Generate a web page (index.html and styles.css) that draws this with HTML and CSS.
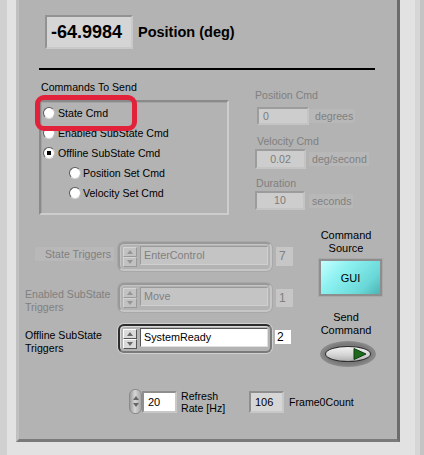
FILE: index.html
```html
<!DOCTYPE html>
<html>
<head>
<meta charset="utf-8">
<title>Commands</title>
<link rel="stylesheet" href="styles.css">
</head>
<body>
<div class="screen">
  <div class="edge-left"></div>
  <div class="panel">
    <div class="highlight"></div>

    <div class="pos-row">
      <div class="pos-box">-64.9984</div>
      <div class="pos-label">Position (deg)</div>
    </div>
    <div class="rule"></div>

    <div class="cmds">
      <div class="cmds-left">
        <div class="cap">Commands To Send</div>
        <div class="group">
          <div class="radio"><span class="dot"></span><span class="rtext">State Cmd</span></div>
          <div class="radio"><span class="dot"></span><span class="rtext">Enabled SubState Cmd</span></div>
          <div class="radio"><span class="dot on"></span><span class="rtext">Offline SubState Cmd</span></div>
          <div class="radio sub"><span class="dot"></span><span class="rtext">Position Set Cmd</span></div>
          <div class="radio sub"><span class="dot"></span><span class="rtext">Velocity Set Cmd</span></div>
        </div>
      </div>
      <div class="cmds-right">
        <div class="flabel l1">Position Cmd</div>
        <div class="frow r1"><div class="fbox b1">0</div><div class="unit u1">degrees</div></div>
        <div class="flabel l2">Velocity Cmd</div>
        <div class="frow r2"><div class="fbox b2 center">0.02</div><div class="unit u2">deg/second</div></div>
        <div class="flabel l3">Duration</div>
        <div class="frow r3"><div class="fbox b3 center">10</div><div class="unit u3">seconds</div></div>
      </div>
    </div>

    <div class="lower">
      <div class="triggers">
        <div class="tlabel single dis">State Triggers</div>
        <div class="ring dis">
          <div class="spin"><span class="half"><i class="up"></i></span><span class="half"><i class="down"></i></span></div>
          <div class="rfield">EnterControl</div>
        </div>
        <div class="count dis">7</div>

        <div class="tlabel dis">Enabled SubState<br>Triggers</div>
        <div class="ring dis">
          <div class="spin"><span class="half"><i class="up"></i></span><span class="half"><i class="down"></i></span></div>
          <div class="rfield">Move</div>
        </div>
        <div class="count dis c1">1</div>

        <div class="tlabel act">Offline SubState<br>Triggers</div>
        <div class="ring act">
          <div class="spin"><span class="half"><i class="up"></i></span><span class="half"><i class="down"></i></span></div>
          <div class="rfield">SystemReady</div>
        </div>
        <div class="count act">2</div>
      </div>

      <div class="source">
        <div class="stext">Command<br>Source</div>
        <div class="gui-btn"><div class="gui-face">GUI</div></div>
        <div class="stext send-text">Send<br>Command</div>
        <div class="send-btn">
          <div class="send-face">
            <svg class="play" width="14" height="12" viewBox="0 0 14 12"><polygon points="1,0.5 13,6 1,11.5" fill="#1d6a1d" stroke="#0f3d0f" stroke-width="1"/></svg>
          </div>
        </div>
      </div>
    </div>

    <div class="bottom">
      <div class="vspin"><i class="up"></i><i class="down"></i></div>
      <div class="numbox">20</div>
      <div class="blabel">Refresh<br>Rate [Hz]</div>
      <div class="framebox">106</div>
      <div class="flabel2">Frame0Count</div>
    </div>
  </div>
  <div class="edge-right"></div>
</div>
</body>
</html>
```

FILE: styles.css
```css
* { box-sizing: border-box; }
html, body { margin: 0; padding: 0; }
body {
  font-family: "Liberation Sans", Arial, sans-serif;
  font-size: 10.6px;
  line-height: 12px;
  color: #000;
  background: #e2e2e2;
}
.screen {
  display: flex;
  width: 424px;
  height: 455px;
  background: #e2e2e2;
}
.edge-left {
  width: 16px;
  height: 455px;
  background: linear-gradient(to right, #d0d0d0 7px, #e2e2e2 7px);
}
.edge-right {
  width: 24px;
  height: 455px;
  background: linear-gradient(to right, #e2e2e2 15px, #d6d6d6 15px, #d6d6d6 20px, #c4c4c4 20px);
}
.panel {
  position: relative;
  width: 384px;
  height: 442px;
  background: #b3b3b3;
  border-left: 3px solid #c0c0c0;
  border-right: 3px solid #6c6c6c;
  border-bottom: 3px solid #7a7a7a;
  padding-left: 6px;
  display: flex;
  flex-direction: column;
  align-items: flex-start;
}
.highlight {
  position: absolute;
  left: 16px;
  top: 95px;
  width: 102px;
  height: 36px;
  border: 5px solid #e2213b;
  border-radius: 9px;
  z-index: 5;
}

/* position indicator */
.pos-row {
  display: flex;
  align-items: center;
  margin-top: 15px;
  margin-left: 20px;
}
.pos-box {
  width: 88px;
  height: 34px;
  border: 2px solid;
  border-color: #929292 #c9c9c9 #c9c9c9 #929292;
  background: #d5d5d5;
  font-weight: bold;
  font-size: 18px;
  line-height: 30px;
  padding-left: 4px;
}
.pos-label {
  margin-left: 5px;
  font-weight: bold;
  font-size: 14.5px;
  line-height: 17px;
}
.rule {
  margin-top: 19px;
  margin-left: 14px;
  width: 336px;
  height: 2px;
  background: #000;
}

/* commands */
.cmds {
  display: flex;
  margin-left: 14px;
}
.cmds-left { width: 190px; }
.cap {
  margin-top: 11px;
  padding-left: 2px;
}
.group {
  margin-top: 7px;
  width: 190px;
  height: 115px;
  border: 2px solid;
  border-color: #8a8a8a #cdcdcd #cdcdcd #8a8a8a;
  box-shadow: inset 1px 1px 0 #a4a4a4;
  padding: 1px 0 0 2px;
}
.radio {
  display: flex;
  align-items: center;
  height: 20px;
}
.radio.sub { padding-left: 26px; }
.dot {
  position: relative;
  width: 12px;
  height: 12px;
  border-radius: 50%;
  background: #fff;
  border: 1px solid #5a5a5a;
  border-right-color: #bcbcbc;
  border-bottom-color: #d8d8d8;
  flex: none;
}
.dot.on::after {
  content: "";
  position: absolute;
  left: 3px;
  top: 3px;
  width: 4px;
  height: 4px;
  background: #000;
}
.rtext { margin-left: 3px; }
.radio.sub .rtext { margin-left: 2px; }

.cmds-right {
  margin-left: 26px;
  display: flex;
  flex-direction: column;
  align-items: flex-start;
  color: #808080;
}
.flabel { line-height: 12px; }
.l1 { margin-top: 19px; margin-left: 0; }
.l2 { margin-top: 10px; margin-left: 2px; }
.l3 { margin-top: 8px; margin-left: 1px; }
.frow { display: flex; align-items: center; }
.r1 { margin-top: 6px; margin-left: 2px; }
.r2 { margin-top: 2px; }
.r3 { margin-top: 2px; }
.fbox {
  border: 2px solid;
  border-color: #9c9c9c #c4c4c4 #c4c4c4 #9c9c9c;
  background: #cdcdcd;
  color: #7c7c7c;
  padding-left: 4px;
  line-height: 14px;
}
.fbox.center { text-align: center; padding-left: 0; }
.b1 { width: 52px; height: 18px; }
.b2 { width: 51px; height: 20px; line-height: 16px; }
.b3 { width: 50px; height: 19px; line-height: 15px; }
.unit {
  background: #b8b8b8;
  padding: 1px 2px 1px 6px;
  color: #808080;
}
.u1 { margin-left: 0; }
.u2 { margin-left: 3px; padding-left: 3px; }
.u3 { margin-left: 4px; padding-left: 3px; }

/* lower */
.lower {
  display: flex;
  align-items: flex-start;
}
.triggers {
  margin-top: 27px;
  display: grid;
  grid-template-columns: 89px 154px 17px;
  grid-auto-rows: 29px;
  column-gap: 4px;
  row-gap: 12px;
}
.tlabel {
  align-self: start;
  margin-top: 5px;
  line-height: 12.5px;
}
.tlabel.single {
  margin-left: 10px;
  text-align: right;
  background: #b8b8b8;
  line-height: 14px;
  padding-right: 3px;
}
.tlabel.dis { color: #808080; }
.ring {
  display: flex;
  align-items: flex-start;
  border: 2px solid;
  border-radius: 6px;
  padding: 2px 2px 0 3px;
}
.ring.dis {
  border-color: #999 #c6c6c6 #c6c6c6 #999;
  box-shadow: inset 1px 1px 0 #c4c4c4, 0 0 0 1px #a8a8a8;
}
.ring.act {
  border-color: #2c2c2c #7a7a7a #7a7a7a #2c2c2c;
  box-shadow: inset 1px 1px 0 #d8d8d8, 0 0 0 1px #d0d0d0;
}
.spin {
  width: 14px;
  height: 20px;
  display: flex;
  flex-direction: column;
  margin-top: 1px;
  flex: none;
}
.half {
  flex: 1;
  display: flex;
  align-items: center;
  justify-content: center;
  border: 1px solid;
}
.ring.dis .half { border-color: #d4d4d4 #999 #999 #d4d4d4; background: #c2c2c2; }
.ring.act .half { border-color: #fff #555 #555 #fff; background: #dadada; }
.up, .down {
  display: block;
  width: 0;
  height: 0;
  border-left: 3px solid transparent;
  border-right: 3px solid transparent;
}
.up { border-bottom: 4px solid #6a6a6a; }
.down { border-top: 4px solid #6a6a6a; }
.ring.dis .up { border-bottom-color: #959595; }
.ring.dis .down { border-top-color: #959595; }
.rfield {
  margin-left: 3px;
  width: 128px;
  height: 19px;
  border: 1px solid;
  padding-left: 3px;
  line-height: 17px;
  font-size: 10.8px;
}
.ring.dis .rfield {
  background: #c4c4c4;
  border-color: #9a9a9a #d0d0d0 #d0d0d0 #9a9a9a;
  color: #808080;
}
.ring.act .rfield {
  background: #fff;
  border-color: #555 #e0e0e0 #e0e0e0 #555;
  color: #000;
}
.count {
  align-self: start;
  margin-top: 5px;
  padding-left: 3px;
  line-height: 19px;
  height: 19px;
}
.count.dis {
  background: #c6c6c6;
  color: #808080;
  font-size: 12px;
}
.count.c1 { margin-top: 6px; height: 18px; line-height: 18px; }
.count.act {
  margin-top: 6px;
  margin-left: -1px;
  width: 16px;
  height: 14px;
  line-height: 14px;
  background: #fff;
  padding-left: 2px;
  font-size: 12px;
}

/* command source */
.source {
  margin-left: 13px;
  width: 80px;
  display: flex;
  flex-direction: column;
  align-items: flex-start;
}
.stext {
  width: 80px;
  text-align: center;
  line-height: 13px;
  margin-top: 14px;
  font-size: 11px;
}
.gui-btn {
  margin-top: 3px;
  margin-left: 12px;
  width: 65px;
  height: 39px;
  padding: 2px;
  background: #8e8e8e;
  border: 1px solid #a8a8a8;
}
.gui-face {
  width: 100%;
  height: 100%;
  background: linear-gradient(135deg, #c4ffff 0%, #8cf0f0 35%, #6ad8d8 75%, #4cb4b4 100%);
  display: flex;
  align-items: center;
  justify-content: center;
  font-size: 11px;
}
.send-text { margin-top: 14px; }
.send-btn {
  margin-top: 4px;
  margin-left: 14px;
  width: 56px;
  height: 26px;
  border-radius: 50%;
  background: radial-gradient(ellipse at center, #7a7a7a 55%, #939393 75%, #a8a8a8 100%);
  display: flex;
  align-items: center;
  justify-content: center;
}
.send-face {
  width: 46px;
  height: 16px;
  border-radius: 50%;
  border: 1px solid #2e2e2e;
  background: linear-gradient(to bottom, #f2f2f2, #d2d2d2 60%, #b0b0b0);
  display: flex;
  align-items: center;
  justify-content: flex-end;
  padding-right: 3px;
}
.play { display: block; }

/* bottom row */
.bottom {
  display: flex;
  align-items: center;
  margin-top: 22px;
  margin-left: 104px;
  height: 25px;
}
.vspin {
  width: 13px;
  height: 25px;
  border-radius: 6px;
  border: 1px solid #8a8a8a;
  background: linear-gradient(to right, #9c9c9c, #d6d6d6 45%, #a6a6a6);
  display: flex;
  flex-direction: column;
  align-items: center;
  justify-content: center;
  gap: 3px;
}
.vspin .up { border-bottom-color: #666; }
.vspin .down { border-top-color: #666; }
.numbox {
  width: 35px;
  height: 22px;
  border: 2px solid;
  border-color: #8e8e8e #c8c8c8 #c8c8c8 #8e8e8e;
  background: #fff;
  padding-left: 4px;
  line-height: 18px;
  font-size: 11px;
}
.blabel {
  width: 72px;
  padding-left: 4px;
  line-height: 12px;
}
.framebox {
  width: 35px;
  height: 22px;
  border: 2px solid;
  border-color: #8e8e8e #c8c8c8 #c8c8c8 #8e8e8e;
  background: #d6d6d6;
  padding-left: 4px;
  line-height: 18px;
  font-size: 11px;
}
.flabel2 { margin-left: 5px; }
```
